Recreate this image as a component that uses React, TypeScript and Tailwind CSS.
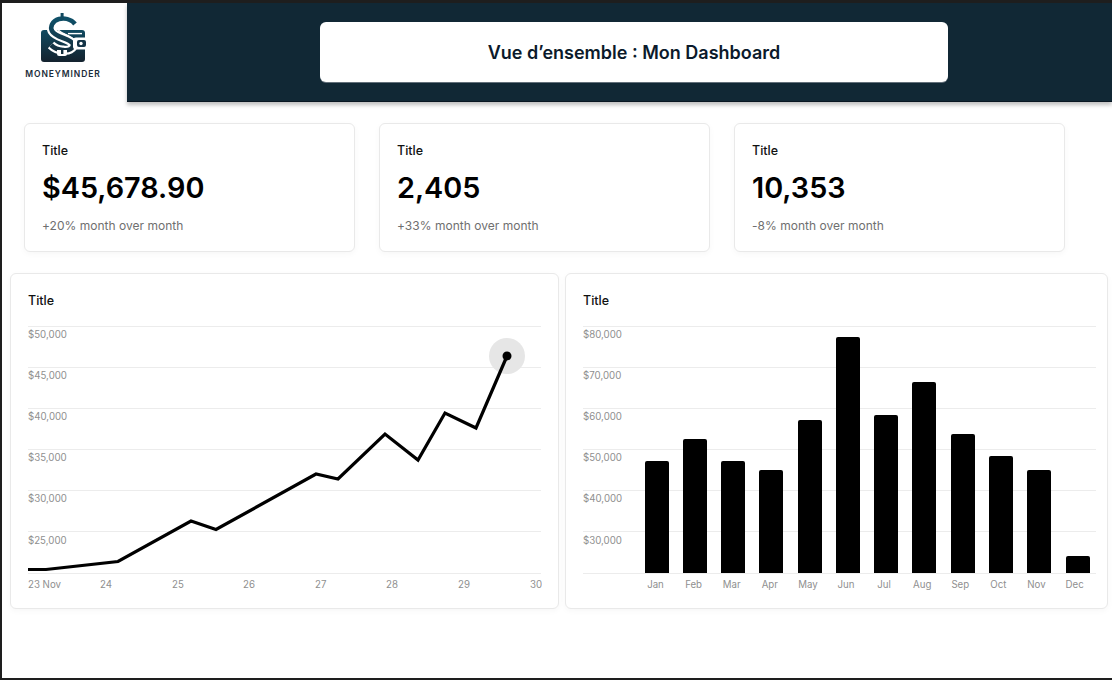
const sans = "font-['Inter','Liberation_Sans',sans-serif]";

const stats = [
  { value: "$45,678.90", note: "+20% month over month" },
  { value: "2,405", note: "+33% month over month" },
  { value: "10,353", note: "-8% month over month" },
];

const gridYs = [1, 42, 83, 124, 165, 206, 248];
const points = "0,244.5 18,244.5 90,236.5 163,196 188,204.5 288,149 310,154 357,109 390,135 417,88 448,103 479,31";
const bars = [
  { m: "Jan", x: 645, y: 136 },
  { m: "Feb", x: 683, y: 114 },
  { m: "Mar", x: 721, y: 136 },
  { m: "Apr", x: 759, y: 145 },
  { m: "May", x: 798, y: 95 },
  { m: "Jun", x: 836, y: 12 },
  { m: "Jul", x: 874, y: 90 },
  { m: "Aug", x: 912, y: 57 },
  { m: "Sep", x: 951, y: 109 },
  { m: "Oct", x: 989, y: 131 },
  { m: "Nov", x: 1027, y: 145 },
  { m: "Dec", x: 1066, y: 231 },
];

function Grid({ width }: { width: number }) {
  return (
    <>
      {gridYs.map((y) => (
        <line key={y} x1="0" x2={width} y1={y + 0.5} y2={y + 0.5} stroke="#ececec" strokeWidth="1" />
      ))}
    </>
  );
}

function YLabels({ labels }: { labels: string[] }) {
  return (
    <>
      {labels.map((l, i) => (
        <text key={l} x="0" y={12.5 + i * 41.2} fontSize="9.7" fill="#8f8f8f">
          {l}
        </text>
      ))}
    </>
  );
}

function Logo() {
  return (
    <svg width="50" height="52" viewBox="0 0 50 52" className="block">
      <defs>
        <linearGradient id="wal" x1="0" y1="0" x2="0" y2="1">
          <stop offset="0" stopColor="#104a60" />
          <stop offset="1" stopColor="#14222e" />
        </linearGradient>
        <linearGradient id="dol" x1="0" y1="0" x2="0" y2="1">
          <stop offset="0" stopColor="#0f5068" />
          <stop offset="1" stopColor="#14303f" />
        </linearGradient>
      </defs>
      <path d="M3 20 Q3 17 6 17 H44 Q47 17 47 20 V46 Q47 49 44 49 H6 Q3 49 3 46 Z" fill="url(#wal)" />
      <path d="M30 20.6 H44" stroke="#fff" strokeWidth="1.4" />
      <path
        d="M37 11 C33 6 26 5 21 6 C14 8 12 14 14 18 C18 25 32 25 35 31 C36 36 30 38 25 37 C20 37 16 35 13 32"
        fill="none"
        stroke="#fff"
        strokeWidth="9"
      />
      <path
        d="M37 11 C33 6 26 5 21 6 C14 8 12 14 14 18 C18 25 32 25 35 31 C36 36 30 38 25 37 C20 37 16 35 13 32"
        fill="none"
        stroke="url(#dol)"
        strokeWidth="4.6"
      />
      <path d="M18 14 C20 20 30 21 37 27" fill="none" stroke="#fff" strokeWidth="1.1" />
      <rect x="22.6" y="0" width="3" height="7" fill="#124a60" />
      <path d="M19 37 H29 V41 Q29 43 27 43 H21 Q19 43 19 41 Z" fill="#fff" />
      <rect x="23" y="37" width="2.4" height="4" fill="#14303f" />
      <rect x="35" y="24.5" width="15" height="12" rx="3" fill="#fff" />
      <rect x="39" y="27" width="9" height="7" rx="2" fill="#143447" />
      <circle cx="43" cy="30.5" r="1.7" fill="#fff" />
    </svg>
  );
}

function Panel({ children, className }: { children: React.ReactNode; className: string }) {
  return (
    <section
      className={`rounded-md border border-[#e9e9e9] bg-white shadow-[0_2px_6px_rgba(0,0,0,0.035)] ${className}`}
    >
      {children}
    </section>
  );
}

export default function App() {
  return (
    <div
      className={`${sans} flex h-[680px] w-[1112px] flex-col overflow-hidden border-t-[3px] border-b-2 border-l-2 border-[#1e1e1e] bg-white text-black`}
    >
      <header className="flex h-[99px] shrink-0">
        <div className="flex w-[125px] shrink-0 flex-col items-center pr-[3px] pt-[10px]">
          <Logo />
          <div className="mt-[3px] text-[8.5px] font-semibold leading-[12px] tracking-[0.9px] text-[#1a2c3a]">
            MONEYMINDER
          </div>
        </div>
        <div className="flex flex-1 items-center justify-start border-b border-[#0a1722] bg-[#112835] pl-[193px] shadow-[0_3px_4px_rgba(0,0,0,0.25)]">
          <div className="mb-px flex h-[60px] w-[628px] items-center justify-center rounded-[6px] bg-white shadow-[0_1px_0_rgba(120,130,140,0.8)]">
            <h1 className="mt-px text-[18px] font-semibold text-[#0b1a2b]">Vue d’ensemble : Mon Dashboard</h1>
          </div>
        </div>
      </header>

      <div className="mt-[21px] flex gap-[24px] pl-[22px]">
        {stats.map((s) => (
          <Panel key={s.value} className="h-[129px] w-[331px] px-[17px] pt-[19px]">
            <div className="text-[12.5px] font-medium leading-[16px] text-[#111]">Title</div>
            <div className="mt-[10px] text-[28.8px] font-semibold leading-[38px] text-black">{s.value}</div>
            <div className="mt-[11px] text-[12px] leading-[16px] tracking-[0.02px] text-[#6f6f6f]">{s.note}</div>
          </Panel>
        ))}
      </div>

      <div className="mt-[21px] flex gap-[6px] pl-[8px]">
        <Panel className="h-[336px] w-[549px] pl-[17px] pt-[19px]">
          <div className="text-[12.5px] font-medium leading-[16px] text-[#111]">Title</div>
          <svg width="514" height="270" viewBox="0 0 514 270" className="mt-[16px] block">
            <Grid width={513} />
            <YLabels labels={["$50,000", "$45,000", "$40,000", "$35,000", "$30,000", "$25,000"]} />
            <circle cx="479" cy="31" r="18" fill="#e6e6e6" />
            <polyline points={points} fill="none" stroke="#000" strokeWidth="3.2" strokeLinejoin="miter" />
            <circle cx="479" cy="31" r="4.5" fill="#000" />
            {[
              ["23 Nov", 0],
              ["24", 72],
              ["25", 144],
              ["26", 215],
              ["27", 287],
              ["28", 358],
              ["29", 430],
              ["30", 502],
            ].map(([t, x]) => (
              <text key={t} x={x} y="263" fontSize="9.7" fill="#8f8f8f">
                {t}
              </text>
            ))}
          </svg>
        </Panel>
        <Panel className="h-[336px] w-[543px] pl-[17px] pt-[19px]">
          <div className="text-[12.5px] font-medium leading-[16px] text-[#111]">Title</div>
          <svg width="514" height="270" viewBox="0 0 514 270" className="mt-[16px] block">
            <Grid width={513} />
            <YLabels labels={["$80,000", "$70,000", "$60,000", "$50,000", "$40,000", "$30,000"]} />
            {bars.map((b, i) => (
              <g key={b.m}>
                <path
                  d={`M${b.x - 583} 248 V${b.y + 2} Q${b.x - 583} ${b.y} ${b.x - 581} ${b.y} H${b.x - 561} Q${b.x - 559} ${b.y} ${b.x - 559} ${b.y + 2} V248 Z`}
                  fill="#000"
                />
                <text x={72.5 + i * 38.1} y="263" fontSize="9.7" fill="#8f8f8f" textAnchor="middle">
                  {b.m}
                </text>
              </g>
            ))}
          </svg>
        </Panel>
      </div>
    </div>
  );
}
